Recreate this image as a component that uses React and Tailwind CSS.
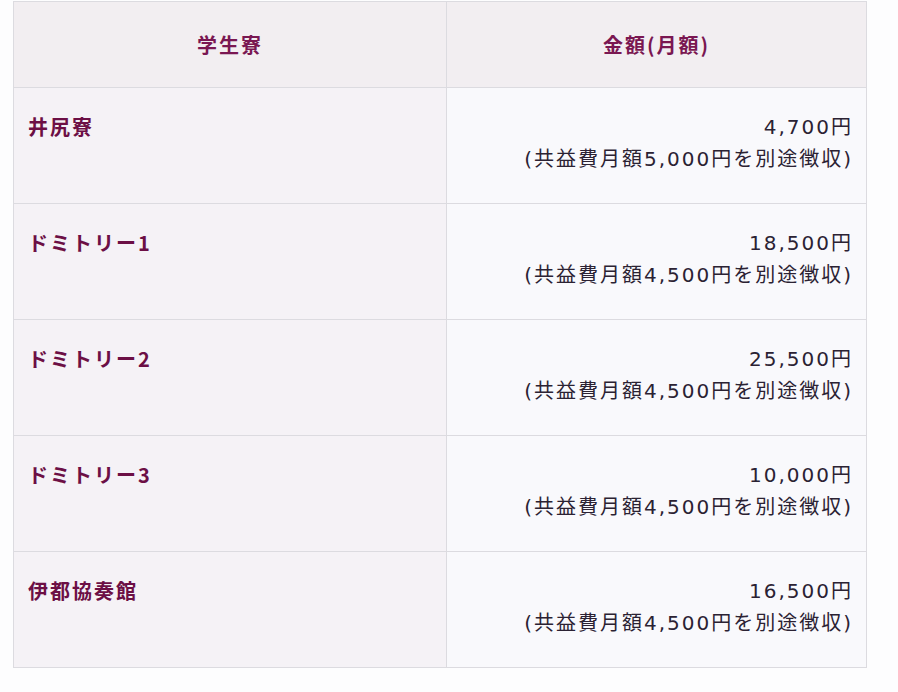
export default function App() {
  const rows = [
    { name: "井尻寮", price: "4,700円", fee: "(共益費月額5,000円を別途徴収)" },
    { name: "ドミトリー1", price: "18,500円", fee: "(共益費月額4,500円を別途徴収)" },
    { name: "ドミトリー2", price: "25,500円", fee: "(共益費月額4,500円を別途徴収)" },
    { name: "ドミトリー3", price: "10,000円", fee: "(共益費月額4,500円を別途徴収)" },
    { name: "伊都協奏館", price: "16,500円", fee: "(共益費月額4,500円を別途徴収)" },
  ];
  return (
    <div
      className="w-[898px] h-[692px] bg-[#fdfdfe] pt-[1px] pl-[13px]"
      style={{ fontFamily: '"Noto Sans CJK JP", "Noto Sans", sans-serif' }}
    >
      <table className="w-[854px] border-collapse">
        <thead>
          <tr className="h-[86px] bg-[#f2eef1]">
            <th className="w-[433px] border border-[#dcdbe0] text-center text-[20px] font-bold text-[#7a1752] tracking-[2px]">
              学生寮
            </th>
            <th className="border border-[#dcdbe0] text-center text-[20px] font-bold text-[#7a1752] tracking-[2px]">
              金額(月額)
            </th>
          </tr>
        </thead>
        <tbody>
          {rows.map((r) => (
            <tr key={r.name} className="h-[116px]">
              <td className="align-top border border-[#dcdbe0] bg-[#f5f2f6] pl-[14px] pt-[23px] text-[20px] leading-[32px] font-bold text-[#6c0f45] tracking-[2px]">
                {r.name}
              </td>
              <td
                className="align-top border border-[#dcdbe0] bg-[#f9f9fc] pr-[13px] pt-[23px] text-right text-[20px] leading-[32px] text-[#2b2233] tracking-[2px]"
                style={{ fontFamily: '"DejaVu Sans", "Noto Sans CJK JP", sans-serif' }}
              >
                <div>{r.price}</div>
                <div>{r.fee}</div>
              </td>
            </tr>
          ))}
        </tbody>
      </table>
    </div>
  );
}
